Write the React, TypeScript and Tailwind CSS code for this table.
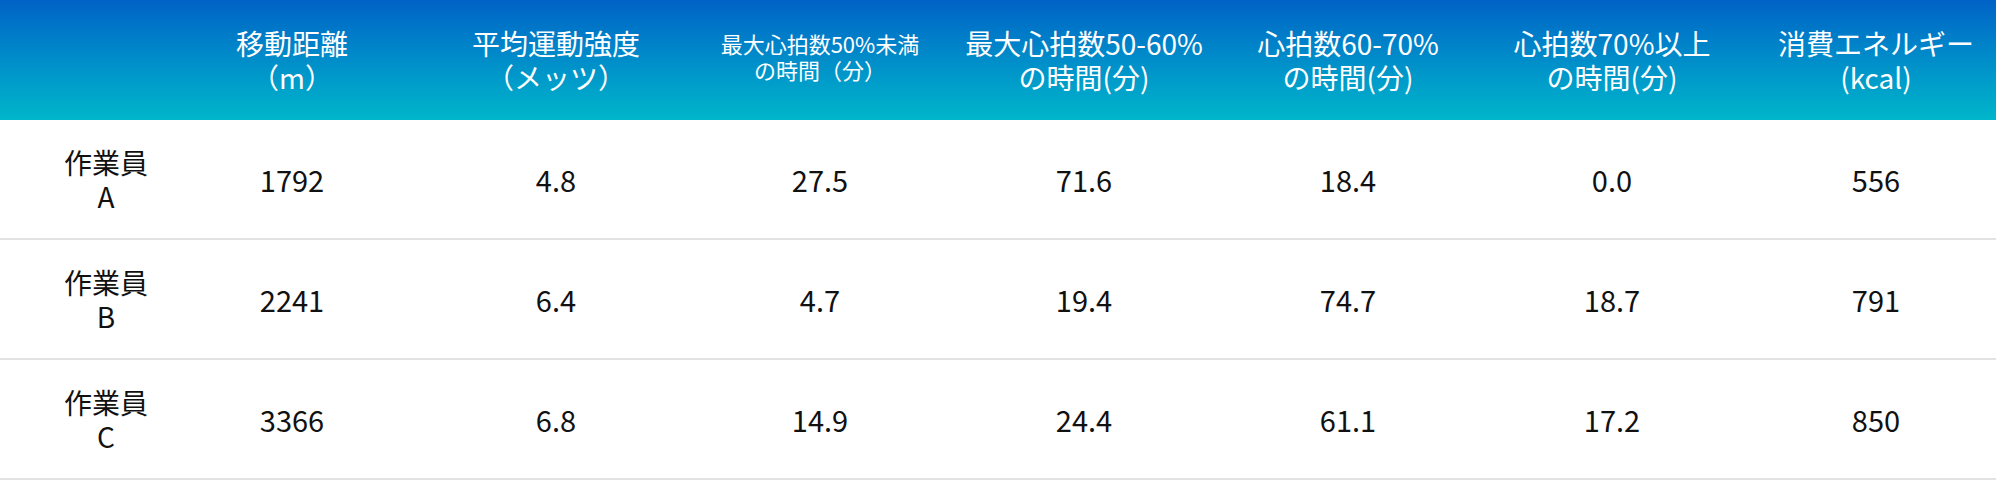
const headers: { lines: string[]; small?: boolean }[] = [
  { lines: ['移動距離', '（m）'] },
  { lines: ['平均運動強度', '（メッツ）'] },
  { lines: ['最大心拍数50%未満', 'の時間（分）'], small: true },
  { lines: ['最大心拍数50-60%', 'の時間(分)'] },
  { lines: ['心拍数60-70%', 'の時間(分)'] },
  { lines: ['心拍数70%以上', 'の時間(分)'] },
  { lines: ['消費エネルギー', '(kcal)'] },
];

const rows = [
  { name: 'A', values: ['1792', '4.8', '27.5', '71.6', '18.4', '0.0', '556'] },
  { name: 'B', values: ['2241', '6.4', '4.7', '19.4', '74.7', '18.7', '791'] },
  { name: 'C', values: ['3366', '6.8', '14.9', '24.4', '61.1', '17.2', '850'] },
];

const grid = 'grid grid-cols-[160px_repeat(7,264px)] w-[2008px]';

export default function App() {
  return (
    <div
      className="w-[1996px] overflow-hidden bg-white"
      style={{ fontFamily: '"Noto Sans CJK JP", "Noto Sans", sans-serif' }}
    >
      <div className={`${grid} h-[120px] bg-gradient-to-b from-[#0062c6] to-[#00b6ca] text-white`}>
        <div />
        {headers.map((h, i) => (
          <div key={i} className="flex items-center justify-center text-center">
            {h.small ? (
              <div className="text-[22px] leading-[26px] -mt-[8px]">
                {h.lines.map((l) => (
                  <div key={l}>{l}</div>
                ))}
              </div>
            ) : (
              <div className="text-[28px] leading-[34px]">
                {h.lines.map((l) => (
                  <div key={l}>{l}</div>
                ))}
              </div>
            )}
          </div>
        ))}
      </div>

      {rows.map((r) => (
        <div
          key={r.name}
          className={`${grid} h-[120px] border-b-2 border-[#e2e2e2] text-[28px] leading-[34px] text-[#111]`}
        >
          <div className="flex flex-col items-center justify-center pl-[52px] text-center">
            <div>作業員</div>
            <div>{r.name}</div>
          </div>
          {r.values.map((v, i) => (
            <div key={i} className="flex items-center justify-center text-[29px]">
              {v}
            </div>
          ))}
        </div>
      ))}
    </div>
  );
}
